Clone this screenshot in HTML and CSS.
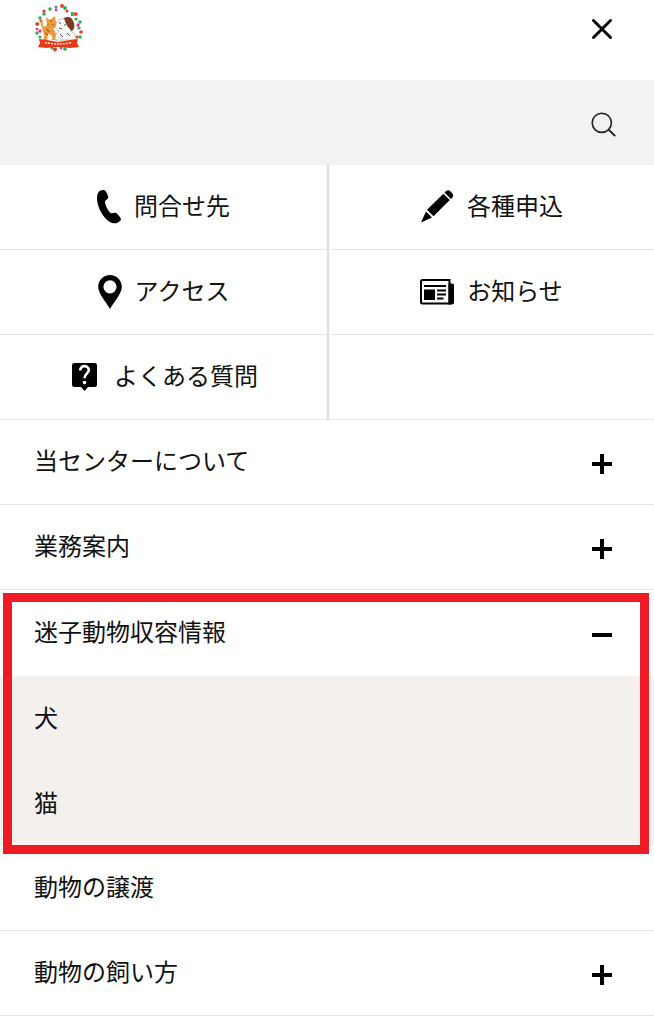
FILE: index.html
```html
<!DOCTYPE html>
<html lang="ja">
<head>
  <meta charset="UTF-8">
  <meta name="viewport" content="width=device-width, initial-scale=1">
  <title>メニュー</title>
  <link rel="stylesheet" href="styles.css">
</head>
<body>
  <header class="header">
    <a href="#" class="logo" aria-label="トップページ">
      <svg viewBox="0 0 48 48" width="48" height="48">
        <!-- Wreath -->
        <g fill="#2fae4e">
          <circle cx="15" cy="5" r="1.8"/><circle cx="21" cy="3" r="1.5"/><circle cx="30" cy="4" r="1.9"/>
          <rect x="36" y="8" width="2.500" height="4"/><circle cx="9" cy="10" r="1.8"/>
          <circle cx="5" cy="14" r="1.7"/><circle cx="3" cy="20" r="1.5"/><circle cx="2" cy="29" r="1.8"/>
          <circle cx="5" cy="33" r="1.6"/><circle cx="41" cy="15" r="1.6"/><circle cx="45" cy="18" r="1.7"/>
          <circle cx="44" cy="24" r="1.6"/><circle cx="45" cy="33" r="1.8"/><circle cx="17" cy="44" r="1.5"/>
          <circle cx="30" cy="45" r="1.8"/><circle cx="10" cy="35" r="1.3"/>
        </g>
        <g fill="#e8382c">
          <circle cx="9" cy="7" r="1.6"/><circle cx="27" cy="2" r="1.9"/><circle cx="32" cy="7" r="1.5"/>
          <rect x="38.500" y="8.500" width="4" height="3.200"/><circle cx="6" cy="17" r="1.5"/>
          <circle cx="2" cy="20" r="1.8"/><circle cx="46" cy="28" r="1.8"/><circle cx="42" cy="33" r="1.5"/>
          <circle cx="20" cy="45.500" r="2"/><circle cx="2" cy="25" r="1.3"/>
        </g>
        <g fill="#e5309a">
          <circle cx="21" cy="6" r="1.4"/><circle cx="5" cy="27" r="1.7"/><circle cx="43" cy="21" r="1.7"/>
          <circle cx="26" cy="44" r="1.3"/>
        </g>
        <!-- Cat -->
        <path d="M8 36c2-3 1-6 0-9s-3-8-2-13c3 3 1 7 3 9l3-2-1-8 4 3 5-4 1 7c1 3-1 5-3 6 4 3 3 7 2 11z" fill="#ee9a3c"/>
        <path d="M11 25l4 3m-5 1l4 3m2-16v2m-3 2v1m5-1v1" stroke="#8e4a14" stroke-width="1" fill="none"/>
        <path d="M13 30c3 0 5 2 4 6h-5z" fill="#fff3df"/>
        <!-- Dog -->
        <path d="M20 36c0-5 2-7 4-9-3-1-4-5-3-8 3-5 10-6 14-1 2 3 2 6 0 9 5 2 6 5 6 9z" fill="#fff" stroke="#9b9796" stroke-width=".7"/>
        <path d="M29 14c4-2 8-1 9 3 2 3 2 8-1 10-3-2-6-6-8-13z" fill="#7a3b22"/>
        <path d="M25 18v2m5 0v2m-6 2l3 1m-2 5l3 3m4-4l3 3" stroke="#444" stroke-width="1" fill="none"/>
        <!-- Ribbon -->
        <path d="M4 35l8 1 11 2 12-2 8-1-1 4 2 4-9 1-12-1-12 1-8-1 2-4z" fill="#e83817"/>
        <path d="M10 38.500q13 3 27 0" stroke="#ffe6e0" stroke-width="1.500" stroke-dasharray="2 1" fill="none"/>
      </svg>
    </a>
    <button type="button" class="close-button" aria-label="閉じる">
      <svg viewBox="0 0 20 20" width="20" height="20">
        <path d="M1.500 1.500l17 17M18.500 1.500l-17 17" stroke="#000" stroke-width="2.900" stroke-linecap="round" fill="none"/>
      </svg>
    </button>
  </header>

  <form class="search" role="search">
    <input type="search" class="search-input" aria-label="サイト内検索">
    <button type="submit" class="search-button" aria-label="検索">
      <svg viewBox="0 0 26 26" width="26" height="26">
        <circle cx="10.800" cy="10.800" r="9.600" stroke="#222" stroke-width="1.600" fill="none"/>
        <path d="M17.500 17.500l6.700 6.700" stroke="#222" stroke-width="1.900" fill="none"/>
      </svg>
    </button>
  </form>

  <nav class="shortcuts">
    <a href="#" class="shortcut">
      <svg viewBox="0 0 24 34" width="24" height="34">
        <path d="M3 .8C4.500 0 7 -.3 8 .5c1.300 1 3.200 5 3.400 7 .1 1.500-3.200 2.700-3.400 4-.3 2.500 3 9.500 5.500 11.500 1.200.9 4.200-.6 5.500 0 1.700.8 4.800 4.800 5 6.300.2 1.500-3.500 4-6 4C9 33.300 0 19 0 8 0 4.500 1.200 1.800 3 .8z"/>
      </svg>
      <span>問合せ先</span>
    </a>
    <a href="#" class="shortcut">
      <svg viewBox="0 0 34 34" width="34" height="34">
        <path d="M24.500 2.500l1.300-1.200c1.700-1.400 3.300-1.300 4.800.2l1.400 1.400c1.500 1.500 1.600 3.200.2 4.800l-1.300 1.300z"/>
        <path d="M23.400 3.700l6.400 6.400L13.500 26.300 7 19.800z"/>
        <path d="M6 21.500l6 6L1 32.500z"/>
      </svg>
      <span>各種申込</span>
    </a>
    <a href="#" class="shortcut">
      <svg viewBox="0 0 24 34" width="24" height="34">
        <path fill-rule="evenodd" d="M12 0C5.300 0 .2 5.200.2 11.800.2 18.500 7 25.500 12 34c5-8.500 11.800-15.500 11.800-22.200C23.800 5.200 18.700 0 12 0zm0 5.200a6.600 6.600 0 1 1 0 13.200 6.600 6.600 0 0 1 0-13.200z"/>
      </svg>
      <span>アクセス</span>
    </a>
    <a href="#" class="shortcut">
      <svg viewBox="0 0 34 34" width="34" height="34">
        <path d="M2.500 5h27v23.500h-27Q1 28.500 1 27V6.500Q1 5 2.500 5z" fill="#fff" stroke="#000" stroke-width="2"/>
        <path d="M28.500 8.500h4q1.500 0 1.500 1.500v17.500q0 2-2 2h-3.500z"/>
        <path d="M4 10h22v2H4zM4 14.500h11v10.500H4zM17 14.500h9v2h-9zM17 18.500h9v2h-9zM17 22.500h6.500v2H17z"/>
      </svg>
      <span>お知らせ</span>
    </a>
    <a href="#" class="shortcut">
      <svg viewBox="0 0 32 34" width="32" height="34">
        <path d="M5.500 3h20Q28 3 28 5.500v19q0 2.500-2.500 2.500h-6.500l-3.500 4-3.500-4H5.500Q3 27 3 24.500v-19Q3 3 5.500 3z"/>
        <path d="M11.200 10.500c0-6 8.600-5.400 8.600-.5 0 3.600-4.300 3.800-4.300 8.200" fill="none" stroke="#fff" stroke-width="2.600"/>
        <circle cx="15.500" cy="22.500" r="1.800" fill="#fff"/>
      </svg>
      <span>よくある質問</span>
    </a>
    <div class="shortcut"></div>
  </nav>

  <ul class="menu">
    <li class="menu-item">
      <button type="button" class="menu-row toggle" aria-expanded="false">当センターについて</button>
    </li>
    <li class="menu-item">
      <button type="button" class="menu-row toggle" aria-expanded="false">業務案内</button>
    </li>
    <li class="menu-item highlight">
      <button type="button" class="menu-row toggle" aria-expanded="true">迷子動物収容情報</button>
      <ul class="submenu">
        <li><a href="#" class="submenu-link">犬</a></li>
        <li><a href="#" class="submenu-link">猫</a></li>
      </ul>
    </li>
    <li class="menu-item">
      <a href="#" class="menu-row">動物の譲渡</a>
    </li>
    <li class="menu-item">
      <button type="button" class="menu-row toggle" aria-expanded="false">動物の飼い方</button>
    </li>
  </ul>

  <script>
    // Open and close the menu rows
    document.querySelectorAll('.toggle').forEach(function(button) {
      button.addEventListener('click', function() {
        const open = button.getAttribute('aria-expanded') === 'true';
        button.setAttribute('aria-expanded', String(!open));
      });
    });
  </script>
</body>
</html>
```
FILE: styles.css
```css
* {
  box-sizing: border-box;
}
body {
  margin: 0;
  background-color: #fff;
  color: #111;
  font-family: "Noto Sans CJK JP", sans-serif;
  font-size: 24px;
  line-height: 36px;
}
a {
  color: inherit;
  text-decoration: none;
}
button, input {
  font: inherit;
  color: inherit;
  border: none;
  background: none;
  padding: 0;
}
button {
  cursor: pointer;
}
svg {
  display: block;
}

/* Header */
.header {
  display: flex;
  justify-content: space-between;
  align-items: flex-start;
  height: 80px;
  padding: 4px 32px 0 35px;
}
.close-button {
  padding: 15px 10px;
}

/* Search */
.search {
  display: flex;
  align-items: center;
  height: 85px;
  padding: 4px 27px 0 35px;
  background-color: #f2f2f2;
}
.search-input {
  flex: 1;
  min-width: 0;
  outline: none;
}
.search-button {
  padding: 10px;
}

/* Shortcut grid */
.shortcuts {
  display: grid;
  grid-template-columns: 1fr 1fr;
}
.shortcut {
  display: flex;
  justify-content: center;
  align-items: center;
  gap: 13px;
  height: 85px;
  border-bottom: 1px solid #e4e4e4;
}
.shortcut:nth-child(even) {
  border-left: 2px solid #ddd;
}
.shortcut span {
  padding-bottom: 4px;
}

/* Menu */
.menu, .submenu {
  list-style: none;
  margin: 0;
  padding: 0;
}
.menu-row {
  display: flex;
  justify-content: space-between;
  align-items: center;
  width: 100%;
  height: 85px;
  padding: 0 42px 4px 34px;
  border-bottom: 1px solid #e4e4e4;
  text-align: left;
}
.toggle::after {
  content: "";
  width: 20px;
  height: 20px;
  margin-top: 8px;
  background:
    linear-gradient(#000, #000) center / 20px 4px no-repeat,
    linear-gradient(#000, #000) center / 4px 20px no-repeat;
}
.toggle[aria-expanded="true"] {
  height: 86px;
  border-bottom-color: transparent;
}
.toggle[aria-expanded="true"]::after {
  background: linear-gradient(#000, #000) center / 20px 4px no-repeat;
}
.toggle[aria-expanded="false"] + .submenu {
  display: none;
}
.submenu {
  background-color: #f4f0ee;
}
.submenu-link {
  display: flex;
  align-items: center;
  height: 85px;
  padding: 0 34px 4px;
}

/* Red frame over the open group */
.highlight {
  position: relative;
}
.highlight::after {
  content: "";
  position: absolute;
  top: 3px;
  right: 5px;
  bottom: -8px;
  left: 3px;
  border: 9px solid #ed1c24;
  pointer-events: none;
}
```
